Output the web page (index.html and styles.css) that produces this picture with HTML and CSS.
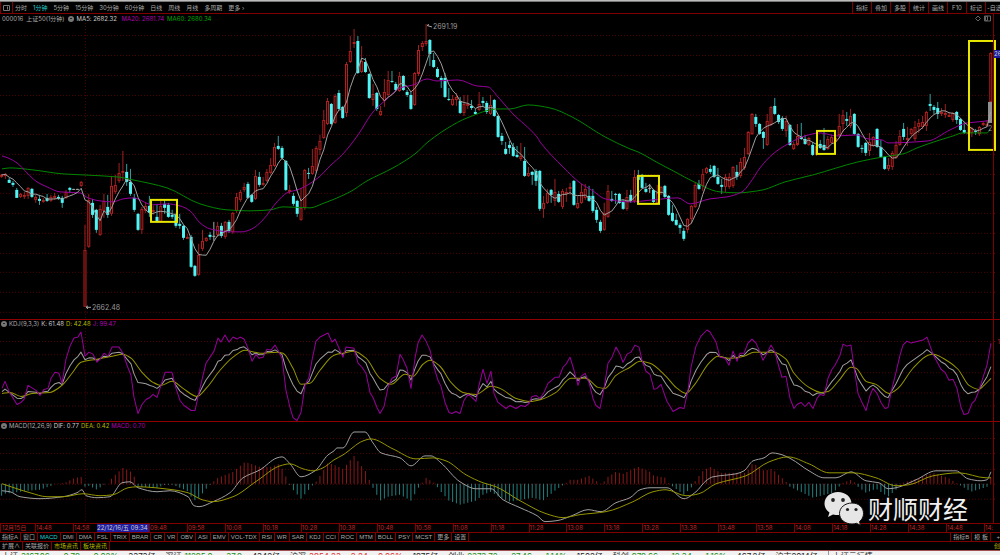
FILE: index.html
```html
<!DOCTYPE html>
<html lang="zh-CN">
<head>
<meta charset="utf-8">
<title>上证50 1分钟</title>
<link rel="stylesheet" href="styles.css">
</head>
<body>
<div class="app">
  <div class="window-edge"></div>
  <nav class="toolbar">
    <button class="layout-btn" aria-label="布局"><svg class="ico" viewBox="0 0 8 6"><path d="M.5.5h6v5h-6zM4.5 1.5v3" fill="none" stroke="#777"/></svg></button>
    <div class="periods">
      <button>分时</button><button class="on">1分钟</button><button>5分钟</button><button>15分钟</button><button>30分钟</button><button>60分钟</button><button>日线</button><button>周线</button><button>月线</button><button>多周期</button><button>更多&nbsp;›</button>
    </div>
    <div class="tools">
      <button>指标</button><button>叠加</button><button>多股</button><button>统计</button><button>画线</button><button>F10</button><button>标记</button><button>-自选</button>
    </div>
  </nav>

  <section class="panel main-panel">
    <div class="plot">
      <header class="readout">
        <span>000016</span><span>上证50(1分钟)</span><i class="dot"></i>
        <span class="white ma5">MA5: 2682.32</span><span class="purple">MA20: 2681.74</span><span class="green">MA60: 2680.34</span>
        <svg class="corner" viewBox="0 0 16 7"><path d="M3 1l2.500 2.500L3 6 .5 3.500zM9.500 1h6v5h-6zM10.500 1.500h2v4h-2z" fill="none" stroke="#666"/></svg>
      </header>
      <svg class="chart" id="price" viewBox="0 23 993 296" preserveAspectRatio="none"></svg>
    </div>
    <aside class="scale"><span class="price-tag">26</span></aside>
  </section>

  <section class="panel kdj-panel">
    <div class="plot">
      <header class="readout">
        <i class="dot"></i><span>KDJ(9,3,3)</span><span class="white">K: 61.48</span><span class="yellow">D: 42.48</span><span class="purple">J: 99.47</span>
      </header>
      <svg class="chart" id="kdj" viewBox="0 328 993 93" preserveAspectRatio="none"></svg>
    </div>
    <aside class="scale"><span class="level">1</span></aside>
  </section>

  <section class="panel macd-panel">
    <div class="plot">
      <header class="readout">
        <i class="dot"></i><span>MACD(12,26,9)</span><span class="white">DIF: 0.77</span><span class="yellow">DEA: 0.42</span><span class="purple">MACD: 0.70</span>
      </header>
      <svg class="chart" id="macd" viewBox="0 430 993 93" preserveAspectRatio="none"></svg>
    </div>
    <aside class="scale"></aside>
    <div class="brand">
      <svg class="bubbles" viewBox="0 0 40 34">
        <g fill="#e6e6e6">
          <path d="M14 1C6.500 1 .5 6 .5 12.500c0 4 2 7 5 9L4 26l5-2.500c2 .6 3.500.6 5 .6 7.500 0 13.500-5 13.500-11.500S21.500 1 14 1z"/>
          <path d="M28 12c-7 0-12.500 4.500-12.500 10.500S21 33 28 33c1.500 0 3-.2 4.500-.7l4 2-1-3.800c2.600-2 4-4.600 4-8C39.500 16.500 35 12 28 12z" stroke="#111" stroke-width="1"/>
        </g>
        <g fill="#222"><circle cx="9" cy="9" r="1.900"/><circle cx="19" cy="9" r="1.900"/><circle cx="23.500" cy="18.500" r="1.600"/><circle cx="32" cy="18.500" r="1.600"/></g>
      </svg>
      <span>财顺财经</span>
    </div>
  </section>

  <div class="times" id="times">
    <span class="day">12月15日</span><span class="first">14:48</span><span class="gap">14:58<b class="cursor-time">22/12/16/五 09:34</b></span>
  </div>

  <nav class="tabs">
    <button>指标A</button><button>窗口</button><button class="on">MACD</button><button>DMI</button><button>DMA</button><button>FSL</button><button>TRIX</button><button>BRAR</button><button>CR</button><button>VR</button><button>OBV</button><button>ASI</button><button>EMV</button><button>VOL-TDX</button><button>RSI</button><button>WR</button><button>SAR</button><button>KDJ</button><button>CCI</button><button>ROC</button><button>MTM</button><button>BOLL</button><button>PSY</button><button>MCST</button><button>更多</button><button>设置</button>
    <span class="spacer"></span>
    <button class="edge">指标B</button><button>模 板</button><span class="plus">+</span>
  </nav>
  <nav class="tabs links">
    <button>扩展∧</button><button>关联报价</button><button class="yellow">市场资讯</button><button class="yellow">板块资讯</button>
    <span class="spacer"></span><span class="yellow">创</span>
  </nav>
  <footer class="ticker">
    <div class="quote"><b>上证</b><span class="dn">3167.86</span><span class="dn">-0.79</span><span class="dn">-0.02%</span><span>3373亿</span></div>
    <div class="quote"><b>深证</b><span class="dn">11295.0</span><span class="dn">-37.9</span><span>4342亿</span></div>
    <div class="quote"><b>沪深</b><span class="up">3954.23</span><span class="up">2.24</span><span class="up">0.06%</span><span>1975亿</span></div>
    <div class="quote"><b>创业</b><span class="dn">2373.72</span><span class="dn">-27.46</span><span class="dn">-1.14%</span><span>1502亿</span></div>
    <div class="quote"><b>科创</b><span class="dn">979.66</span><span class="dn">-12.34</span><span class="dn">-1.16%</span><span>467.2亿</span></div>
    <div class="quote"><span>沪市2014亿</span><b class="host">上证云行情</b></div>
  </footer>
</div>
<script src="chart.js"></script>
</body>
</html>
```

FILE: styles.css
```css
* { box-sizing: border-box; }
html, body { height: 100%; }
body {
  margin: 0;
  background: #000;
  color: #aaa;
  font: 6px/8px Inter, "Noto Sans CJK SC", sans-serif;
  overflow: hidden;
}
button {
  margin: 0;
  padding: 0;
  border: 0;
  background: none;
  color: inherit;
  font: inherit;
  white-space: nowrap;
}
.app { display: flex; flex-direction: column; height: 100vh; }
.window-edge { flex: none; height: 2px; background: #bbb; border-bottom: 1px solid #777; }

.toolbar {
  flex: none;
  display: flex;
  height: 12px;
  border-bottom: 1px solid #800000;
}
.layout-btn { width: 13px; border-left: 1px solid #800000; border-right: 1px solid #800000; }
.ico { display: block; width: 8px; height: 6px; margin: 0 auto; }
.periods { display: flex; flex: 1; gap: 6px; padding-left: 2px; }
.tools { display: flex; }
.tools button { min-width: 19px; border-left: 1px solid #800000; }
.tools button:last-child { width: 15px; min-width: 0; padding-left: 1px; }
.on { color: #2cc; }

.panel { position: relative; display: flex; min-height: 0; }
.main-panel { flex: 306 1 0; border-bottom: 1px solid #900000; }
.kdj-panel { flex: 102 1 0; border-bottom: 1px solid #900000; }
.macd-panel { flex: 101 1 0; }
.plot { flex: 1; display: flex; flex-direction: column; min-width: 0; }
.readout { flex: none; display: flex; align-items: center; gap: 2px; height: 8px; padding-left: 1px; white-space: nowrap; }
.main-panel .readout { gap: 3px; height: 9px; padding-left: 2px; }
.dot { width: 6px; height: 6px; border-radius: 50%; background: #777; display: flex; align-items: center; justify-content: center; }
.dot::after { content: ""; width: 2px; height: 1px; background: #222; }
.ma5 { min-width: 42px; }
.corner { width: 16px; height: 7px; margin-left: auto; margin-right: 2px; }
.white { color: #ccc; }
.purple { color: #b000b0; }
.green { color: #00a800; }
.yellow { color: #b8b800; }
.chart { display: block; flex: 1; width: 100%; min-height: 0; overflow: visible; }
.scale { flex: none; width: 7px; border-left: 1px solid #800000; }
.price-tag { position: absolute; right: 0; top: 36px; width: 6px; overflow: hidden; background: #1c1ca0; color: #ccc; }
.level { position: absolute; right: 0; top: 18px; color: #b02020; }

.grid { stroke: #4c0000; stroke-dasharray: 1 2; }
.axis { stroke: #800000; }
.line { fill: none; stroke-width: 1; stroke-linejoin: round; }
.l-white { stroke: #a0a0a0; }
.l-purple { stroke: #98009c; }
.l-green { stroke: #008600; }
.l-yellow { stroke: #969600; }
.rise { fill: #200000; stroke: #b02222; stroke-width: 1; }
.fall { fill: #50f4f4; }
.wick-rise { stroke: #a02020; }
.wick-fall { stroke: #2fa3a3; }
.wick-flat { stroke: #aaa; }
.bar-up { stroke: #8c1818; }
.bar-down { stroke: #237f7f; }
.last { fill: #909090; }
.mark { fill: none; stroke: #e6e600; stroke-width: 2; }
.note { fill: #999; font-size: 7px; }
.pointer { fill: none; stroke: #aaa; }

.brand {
  position: absolute;
  right: 32px;
  bottom: -2px;
  display: flex;
  align-items: center;
  gap: 4px;
  color: #f0f0f0;
  font: 25px/34px "Noto Sans CJK SC", sans-serif;
}
.bubbles { width: 40px; height: 34px; overflow: visible; }

.times { flex: none; display: flex; height: 9px; border-top: 1px solid #800000; color: #c02828; overflow: hidden; white-space: nowrap; }
.times span { flex: 1 1 0; min-width: 0; border-left: 1px solid #800000; }
.times .day { flex: 0 0 35px; padding-left: 1px; }
.times .first { flex: 0 0 38px; }
.times .gap { position: relative; flex: 0 0 76px; }
.times .end { flex: 0 0 16px; }
.cursor-time { position: absolute; left: 23px; right: 0; top: 0; overflow: hidden; background: #1c1ca0; color: #ccc; font-weight: 400; }

.tabs { flex: none; display: flex; height: 9px; border-top: 1px solid #800000; font-family: "Liberation Sans", "Noto Sans CJK SC", sans-serif; white-space: nowrap; }
.tabs button { padding: 0 2px; border-right: 1px solid #800000; }
.tabs .edge { border-left: 1px solid #800000; }
.tabs .plus { width: 9px; text-align: right; }
.spacer { flex: 1; }
.links { height: 10px; border-bottom: 1px solid #a05050; }

.ticker { flex: none; display: flex; gap: 10px; height: 4px; padding-left: 2px; overflow: hidden; background: #f2f2f2; color: #222; font-size: 8px; line-height: 11px; white-space: nowrap; }
.quote { display: flex; gap: 10px; }
.quote b { font-weight: 400; }
.quote b + span { margin-left: -7px; }
.dn { color: #209020; }
.up { color: #e03030; }
.host { padding-left: 4px; border-left: 1px solid #999; }
```

FILE: chart.js
```js
const STEP = 3.79, START = 1.6;
const xAt = i => START + STEP * i;

// kind, body top, body bottom, wick top, wick bottom
const candles = `r175,177,174,178 r174,176,173,179 c180,183,178,183 c183,185,181,187 c190,198,188,198 r194,197,193,198 r195,197,192,199 r188,196,187,199 c189,197,188,198 r197,200,195,203 c199,201,195,205 r200,202,198,203 c198,201,194,202 r197,201,195,202 r196,198,193,200 c197,199,195,200 c198,203,196,208 r192,198,190,199 c188,190,187,193 w189,189,189,190 w189,189,189,190 r182,186,181,187
r250,307,225,307 r200,247,194,248 c203,215,199,218 c210,230,209,233 r209,235,205,236 r201,211,194,218 c207,215,195,218 r186,214,176,216 r185,192,175,194 r173,181,163,183 r171,173,151,181 c172,182,164,186 c182,194,169,196 c198,210,194,212 c214,230,213,231 r209,230,207,234 r206,211,202,213 c206,213,196,217 r210,212,206,215 c217,222,204,223 r206,222,199,223 c204,208,200,214 c205,217,203,218 c215,217,210,219 c215,226,213,228 c224,226,214,229 c226,238,225,240 r237,238,234,239 c237,267,235,268 c266,276,265,277 r255,275,244,276 r241,249,230,251 r238,241,237,242 c235,237,232,240 w236,237,222,241 r226,235,222,237 c226,236,223,238 r222,237,221,239 c222,231,220,233 r213,232,212,234 r197,211,193,213 r192,200,190,202 r187,190,183,192 c184,198,182,199
c195,202,194,203 r176,199,170,200 c177,185,172,187 r183,185,177,186 r172,181,169,182 r165,173,158,174 r147,166,143,167 c146,149,136,150 c148,158,146,160 c161,190,160,191 r190,192,185,194 c196,204,193,206 c201,214,200,217 r208,220,188,221 r170,208,169,210 c173,174,168,179 r166,174,149,175 r148,171,146,173 r141,150,135,155 r120,138,110,139 r101,124,98,125 c104,124,103,125 r96,123,94,124 c93,109,90,110 c107,118,106,119 r64,113,62,117 r51,62,36,63 r42,44,29,48 c41,73,36,74 r61,72,46,73 c62,72,58,73 c74,98,73,99 r94,100,84,106 c93,109,92,111 r111,115,106,116 r92,101,79,107 r80,95,71,97 c81,82,71,83 c84,90,82,91 r76,91,72,92 c76,90,75,91 c92,95,90,97 c95,109,92,110 r73,105,72,106 r50,74,45,76 r43,47,41,51 r41,44,24,46 c40,54,39,66 c60,67,53,68 c69,77,67,78 c78,80,76,88 c78,97,73,98 c99,100,88,101 r99,105,95,106 r97,100,93,106 c101,113,97,114 r104,113,95,116 r104,106,95,109 c106,108,100,110 c112,114,109,115 r104,110,92,111 c101,103,97,107 c103,112,101,114 r105,114,95,115 c100,116,99,117 c116,137,115,138
c136,141,133,145 c149,154,142,155 c145,148,141,154 c147,156,143,157 c155,157,146,158 r156,159,143,161 c161,176,147,177 r173,176,167,177 c172,175,171,185 c171,181,169,186 c171,209,170,211 r203,209,196,218 r193,203,189,204 c190,195,189,203 r192,201,179,206 c194,202,191,203 r191,207,189,209 r192,193,188,202 r187,189,183,195 c181,205,180,206 r203,208,196,209 r192,203,184,204 r189,198,184,200 c196,201,186,202 c196,211,189,213 c210,220,207,223 c222,231,220,233 r213,230,203,231 r191,217,185,218 c199,201,191,202 c194,195,193,204 c194,203,193,204 c202,209,200,210 r197,209,190,211 c195,201,190,203 r177,201,170,203 c176,180,170,182 c175,188,174,189 c189,192,183,193 w188,189,184,193 c190,202,189,204 r193,203,185,204 r187,193,186,195 c186,197,185,198 c196,215,195,216 c213,221,205,222 c220,225,214,226 c225,228,223,234 c231,239,228,241 r219,230,218,233 r206,219,205,224 r185,207,182,208 c184,189,180,190 r174,186,169,191 r168,173,167,174 c169,172,165,174 c166,177,165,178 c177,184,168,185 c185,187,179,194 r177,187,174,192 r177,187,173,189 r167,186,166,188 c172,177,165,180 r162,176,158,178 r157,168,148,170 r132,154,131,155
r114,134,113,135 c117,124,114,127 c124,134,123,135 c132,138,131,149 r121,145,114,146 r107,125,106,126 c106,114,98,115 c115,122,114,124 c118,129,116,131 r121,131,116,137 c125,145,124,146 r144,149,142,150 r136,145,124,146 c137,139,123,140 c139,144,135,145 r138,145,137,146 c145,155,142,156 r146,155,142,156 c144,148,140,149 c145,150,128,151 r139,149,136,150 r137,143,135,144 r138,142,136,145 r126,135,114,138 r115,124,110,132 c119,121,112,126 r116,126,109,128 c114,134,113,135 c134,147,133,148 c148,149,145,153 c143,153,142,156 r142,151,133,156 r137,146,136,147 c129,147,128,148 c147,157,140,158 c157,169,156,170 r165,169,158,171 r153,167,151,170 r145,158,141,159 r136,145,130,146 c129,137,123,140 r138,139,127,146 r129,134,128,136 r127,139,121,141 r123,127,119,133 r122,127,116,129 r112,126,111,131 c104,106,94,111 c107,110,105,114 c108,114,102,119 r112,114,108,116 r113,115,104,118 r115,116,112,117 r113,120,112,122 c112,120,111,124 c119,130,118,131 c130,133,122,134 r132,133,125,134 r128,133,127,137 c131,132,129,135 r127,134,126,136 r123,125,122,126 r124,125,120,127 r53,102,52,123`
  .trim().split(/\s+/).map(s => {
    const [t, b, hi, lo] = s.slice(1).split(',').map(Number);
    return { kind: s[0], t, b, hi, lo, close: s[0] === 'c' ? b : t };
  });

const parse = s => s.trim().split(/\s+/).map(p => p.split(',').map(Number));
const at = (pts, x) => {
  let k = 1;
  while (k < pts.length - 1 && pts[k][0] < x) k++;
  const [x0, y0] = pts[k - 1], [x1, y1] = pts[k];
  const f = Math.min(1, Math.max(0, (x - x0) / (x1 - x0)));
  return y0 + (y1 - y0) * f;
};

const ma20 = parse(`2,156 8,158 17,163 27,173 37,182 47,187 60,192 80,193 88,198 100,201 113,202 123,199 133,198 153,205 167,204 180,206 190,211 200,223 210,229 230,232 242,232 252,229 263,220 277,202 287,193 300,189 318,178 330,166 343,154 358,135 373,112 387,99 400,88 413,85 427,79 437,81 458,80 477,86 488,87 498,97 512,113 537,137 540,142 563,167 580,183 593,191 605,199 630,202 653,200 678,198 690,204 710,199 727,197 742,192 750,183 760,168 773,154 788,144 805,136 820,133 837,136 857,135 868,139 882,140 888,143 928,141 950,130 967,123 987,121 990,119`);
const ma60 = parse(`2,169 10,168 33,170 63,174 83,175 117,177 133,180 167,188 200,204 227,210 250,211 270,210 283,207 310,208 322,204 350,192 367,181 393,168 415,154 428,142 448,128 467,118 498,109 510,109 528,105 550,108 572,117 605,137 630,149 638,152 658,163 677,173 692,181 720,192 740,193 750,192 763,190 785,182 813,175 858,162 883,157 903,154 917,148 937,141 953,136 963,133 987,133 990,130`);
const kdjJ = parse(`2,388 5,381 9,391 17,404 21,402 24,399 28,385 36,390 40,395 44,389 48,388 51,378 55,372 59,373 62,383 66,359 70,346 74,338 78,337 81,332 85,356 89,352 93,354 97,362 100,359 104,353 108,356 112,347 119,347 123,353 127,365 131,375 134,397 138,413 142,404 146,399 150,397 153,394 157,397 161,385 165,372 172,372 176,388 180,400 184,405 187,407 191,410 195,410 199,392 203,375 206,363 214,351 218,338 221,342 225,335 229,342 233,337 237,339 240,337 244,339 248,348 252,361 256,354 259,358 263,357 267,349 271,350 275,345 278,350 282,358 286,390 290,407 293,417 297,420 301,412 305,385 309,377 312,360 316,341 320,337 328,333 332,342 335,339 343,357 346,347 354,348 358,363 362,367 366,373 370,392 373,397 377,407 380,413 384,406 388,387 392,378 396,376 400,354 403,359 407,368 411,388 415,358 418,343 422,335 426,341 430,350 434,367 438,380 441,386 445,402 449,412 452,413 456,411 460,413 464,400 468,394 472,397 476,401 479,385 483,369 487,383 491,371 494,393 498,402 506,408 510,405 516,408 521,405 525,406 529,403 532,396 536,395 540,398 544,392 548,383 555,377 559,377 563,367 566,364 570,357 574,370 578,385 581,376 585,373 589,382 593,398 596,405 600,408 604,388 608,363 612,357 616,347 620,354 623,362 627,354 631,352 635,345 639,347 642,360 646,371 650,374 654,389 657,388 661,384 667,401 669,404 673,411 680,407 684,408 688,390 691,367 696,346 701,336 707,330 710,332 716,342 720,357 725,358 729,365 733,351 737,361 740,353 744,353 748,343 752,339 756,343 760,352 763,360 767,353 771,345 775,352 779,367 782,377 786,376 790,398 794,408 797,404 801,402 805,406 809,402 813,408 817,398 820,394 824,395 828,378 832,369 835,365 840,355 843,344 847,346 851,345 854,367 858,393 862,402 866,410 870,395 873,388 877,393 881,402 885,408 888,407 892,388 896,372 900,355 903,345 907,341 911,343 923,340 927,337 933,354 941,369 945,372 949,380 953,379 957,388 961,407 964,414 968,413 972,403 975,400 979,390 983,377 987,365 991,343`);
const kdjD = parse(`2,393 10,392 21,396 32,393 50,392 62,385 72,373 81,362 97,359 112,356 123,354 131,358 142,372 153,382 161,385 172,381 183,388 197,396 207,387 220,370 233,357 245,350 260,353 277,352 283,353 293,368 301,384 310,383 320,370 334,355 343,353 354,351 366,358 380,378 391,384 405,374 413,376 423,364 430,360 440,366 451,382 463,392 476,394 491,386 500,388 516,398 530,401 541,399 556,392 571,378 586,378 598,387 605,388 616,375 630,367 640,361 650,363 666,376 676,387 686,393 694,385 709,363 718,356 729,358 744,356 754,352 774,352 786,359 794,373 809,387 821,392 828,391 839,380 851,367 856,368 866,381 876,384 889,393 898,388 913,368 928,355 933,354 948,361 958,369 969,385 979,389 984,385 991,378`);
const kdjK = kdjJ.map(([x, y]) => [x, (y + 2 * at(kdjD, x)) / 3]);
const dif = parse(`2,491 10,492 20,497 40,499 63,497 77,493 82,490 86,496 97,498 110,497 122,483 130,482 138,488 157,492 170,491 188,497 194,506 199,507 213,502 230,493 243,478 260,470 277,458 282,457 290,464 301,477 315,471 328,455 334,451 337,448 343,448 354,432 365,432 373,443 381,453 400,458 411,466 425,456 431,456 441,463 460,482 476,489 491,489 503,500 520,508 537,516 545,522 557,521 572,516 588,510 601,512 616,503 630,498 640,490 650,488 667,488 684,499 696,492 706,481 713,477 736,474 744,471 753,461 764,458 772,453 779,454 791,459 809,471 824,478 836,478 851,472 866,481 879,483 888,489 896,488 916,480 936,471 956,471 968,479 981,481 987,480 991,472`);
const dea = parse(`2,484 17,489 30,493 47,497 63,497 83,494 100,496 113,495 128,488 137,487 173,490 188,493 202,500 213,502 233,497 257,481 280,466 290,464 303,469 313,471 323,468 334,460 343,455 363,441 371,439 393,449 416,459 433,458 446,461 466,475 483,483 496,487 520,501 546,514 563,518 580,515 606,512 633,502 653,492 666,490 686,496 699,494 716,484 746,476 769,462 788,457 809,464 829,473 853,473 876,478 896,486 909,485 933,476 959,473 986,478 991,478`);
const hist = parse(`2,496 5,494 13,493 28,491 40,490 51,486 55,484 65,483 75,478 82,477 85,487 89,486 97,490 101,487 105,484 109,484 112,478 123,468 131,472 135,478 138,487 157,488 165,485 173,485 187,491 194,501 199,498 207,488 211,484 218,478 233,472 245,462 260,467 272,467 278,464 283,470 286,477 289,484 293,490 301,499 307,492 313,485 317,481 328,463 334,465 343,469 354,456 366,472 370,482 373,488 380,501 388,497 400,495 411,501 419,487 423,482 426,478 434,483 441,492 449,501 460,505 476,501 483,495 491,492 500,498 510,502 533,498 543,501 556,490 565,484 570,480 578,480 589,476 596,481 600,484 604,482 608,477 616,472 623,474 638,467 650,472 654,476 666,478 669,484 673,487 684,495 692,487 696,480 703,471 710,467 721,473 746,473 753,463 764,471 772,469 783,479 786,482 790,487 813,498 833,493 839,487 843,483 851,480 855,483 858,487 866,493 876,489 888,497 896,490 900,484 919,478 933,473 948,478 956,483 961,486 971,492 981,489 987,487 991,477`);

const line = (x1, y1, x2, y2, c) => `<line x1="${x1}" y1="${y1}" x2="${x2}" y2="${y2}" class="${c}"/>`;
const poly = (pts, c) => `<polyline points="${pts.map(p => p.join()).join(' ')}" class="line ${c}"/>`;
// cubic curve with horizontal tangents at turning points, so peaks never overshoot
const curve = (pts, c) => {
  const slope = k => (pts[k + 1][1] - pts[k][1]) / (pts[k + 1][0] - pts[k][0]);
  const m = pts.map((_, k) => {
    if (k === 0) return slope(0);
    if (k === pts.length - 1) return slope(k - 1);
    const a = slope(k - 1), b = slope(k);
    return a * b <= 0 ? 0 : 2 * a * b / (a + b);
  });
  let d = `M${pts[0]}`;
  for (let k = 0; k < pts.length - 1; k++) {
    const [x0, y0] = pts[k], [x1, y1] = pts[k + 1], h = (x1 - x0) / 3;
    d += `C${x0 + h},${y0 + m[k] * h} ${x1 - h},${y1 - m[k + 1] * h} ${x1},${y1}`;
  }
  return `<path d="${d}" class="line ${c}"/>`;
};
const grid = ys => ys.map(y => line(0, y + .5, 992, y + .5, 'grid') + line(993, y + .5, 995, y + .5, 'axis')).join('');
const box = (x, y, w, h, c) => `<rect x="${x}" y="${y}" width="${w}" height="${h}" class="${c}"/>`;

const ma5 = candles.map((_, i) => {
  const win = candles.slice(Math.max(0, i - 4), i + 1);
  return [xAt(i), win.reduce((s, k) => s + k.close, 0) / win.length];
});
ma5[261][1] = 112;

let price = grid([35, 55, 75, 95, 115, 134, 154, 174, 193, 213, 233, 253, 272, 292, 312]) + line(85.5, 23, 85.5, 319, 'grid');
candles.forEach((k, i) => {
  const x = xAt(i);
  if (k.kind === 'r') {
    price += line(x, k.hi, x, k.t, 'wick-rise') + line(x, k.b, x, k.lo, 'wick-rise') + box(x - 1, k.t + .5, 2, Math.max(1, k.b - k.t - 1), 'rise');
  } else if (k.kind === 'c') {
    price += line(x, k.hi, x, k.lo, 'wick-fall') + box(x - 1.5, k.t, 3, k.b - k.t, 'fall');
  } else {
    price += line(x, k.hi, x, k.lo, 'wick-flat') + line(x - 1.5, k.t + .5, x + 1.5, k.t + .5, 'wick-flat');
  }
});
price += curve(ma60, 'l-green') + curve(ma20, 'l-purple') + box(988, 102, 4, 21, 'last') + poly(ma5, 'l-white');
price += '<path class="pointer" d="M91 307.500h-5m2-1.500l-2 1.500 2 1.500M427 25.500l2-1m-2 1l5 1.500"/>';
price += '<text x="92" y="310" class="note">2662.48</text><text x="433" y="29" class="note">2691.19</text><text x="988" y="131" class="note">2</text>';
price += box(151, 200, 26, 22, 'mark') + box(638, 176, 21, 28, 'mark') + box(817, 131, 18, 23, 'mark') + box(969, 41, 26, 109, 'mark');
document.getElementById('price').innerHTML = price;

document.getElementById('kdj').innerHTML = grid([341, 354, 372, 392, 405]) + line(85.5, 328, 85.5, 421, 'grid')
  + poly(kdjK, 'l-white') + curve(kdjD, 'l-yellow') + poly(kdjJ, 'l-purple');

let macd = grid([438, 453, 469, 484, 499]) + line(85.5, 430, 85.5, 523, 'grid') + line(0, 484.5, 992, 484.5, 'grid');
candles.forEach((_, i) => {
  const x = xAt(i), y = at(hist, x);
  macd += line(x, 484, x, y, y < 484 ? 'bar-up' : 'bar-down');
});
document.getElementById('macd').innerHTML = macd + curve(dif, 'l-white') + curve(dea, 'l-yellow');

const labels = '09:48 09:58 10:08 10:18 10:28 10:38 10:48 10:58 11:08 11:18 11:28 13:08 13:18 13:28 13:38 13:48 13:58 14:08 14:18 14:28 14:38 14:48'.split(' ');
document.getElementById('times').insertAdjacentHTML('beforeend', labels.map(t => `<span>${t}</span>`).join('') + '<span class="end">14:</span>');
```
